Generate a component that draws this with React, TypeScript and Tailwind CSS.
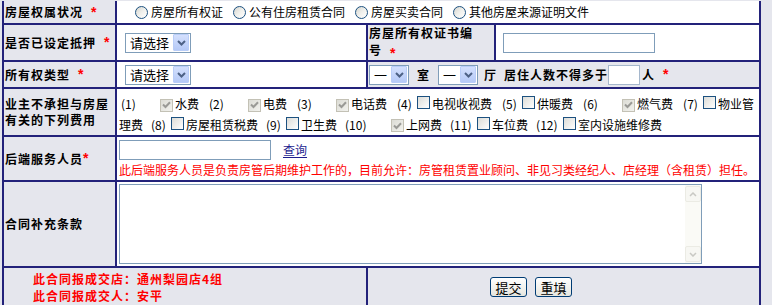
import React from "react";

// legacy rental-contract form, XP style controls

function Star({ tight }: { tight?: boolean }) {
  return (
    <span
      className={`font-['Liberation_Sans',sans-serif] text-[14px] font-bold text-[#ff0000] align-[-3px] ${
        tight ? "ml-0" : "ml-[8px]"
      }`}
    >
      *
    </span>
  );
}

function Select({ text, w }: { text: string; w: string }) {
  return (
    <span
      className={`inline-flex h-[20px] ${w} shrink-0 items-center border border-[#7f9db9] bg-white pl-[4px] pr-px font-normal tracking-normal`}
    >
      <span className="text-[13px] leading-none">{text}</span>
      <span className="ml-auto flex h-[17px] w-[16px] items-center justify-center rounded-[1px] border border-[#b9cdf8] bg-linear-to-b from-[#d4e0fd] to-[#b5c9f7]">
        <svg width="9" height="6" viewBox="0 0 9 6">
          <path d="M1 1 L4.5 4.5 L8 1" fill="none" stroke="#4d6185" strokeWidth="2" />
        </svg>
      </span>
    </span>
  );
}

function Radio({ label }: { label: string }) {
  return (
    <span className="mr-[10px] inline-flex items-center">
      <span className="inline-block h-[13px] w-[13px] rounded-full border border-[#1c5180] bg-linear-to-br from-[#d5d5cf] via-[#f0f0ec] to-white" />
      <span className="ml-[3px]">{label}</span>
    </span>
  );
}

function Check({ checked }: { checked?: boolean }) {
  if (checked) {
    return (
      <span className="inline-flex h-[13px] w-[13px] shrink-0 items-center justify-center border border-[#c3c1b5] bg-linear-to-br from-[#dcdcd5] to-[#f2f2ee]">
        <svg width="9" height="8" viewBox="0 0 9 8">
          <path d="M1 3.5 L3.5 6 L8 1.2" fill="none" stroke="#9a9a96" strokeWidth="2" />
        </svg>
      </span>
    );
  }
  return (
    <span className="inline-block h-[13px] w-[13px] shrink-0 border border-[#1c5180] bg-linear-to-br from-[#dcdcd7] to-white" />
  );
}

type Fee = { n: string; label: string; checked?: boolean };

function FeeItem({ fee, gap }: { fee: Fee; gap: string }) {
  return (
    <span className={`inline-flex items-center ${gap}`}>
      <span className={fee.n.length > 3 ? "w-[24px]" : "w-[17px]"}>{fee.n}</span>
      <span className={fee.checked ? "ml-[22px]" : "ml-[3px]"}>
        <Check checked={fee.checked} />
      </span>
      <span className="ml-[2px]">{fee.label}</span>
    </span>
  );
}

const line1: Fee[] = [
  { n: "(1)", label: "水费", checked: true },
  { n: "(2)", label: "电费", checked: true },
  { n: "(3)", label: "电话费", checked: true },
  { n: "(4)", label: "电视收视费" },
  { n: "(5)", label: "供暖费" },
  { n: "(6)", label: "燃气费", checked: true },
];

const line2: Fee[] = [
  { n: "(8)", label: "房屋租赁税费" },
  { n: "(9)", label: "卫生费" },
  { n: "(10)", label: "上网费", checked: true },
  { n: "(11)", label: "车位费" },
  { n: "(12)", label: "室内设施维修费" },
];

const label = "flex items-center bg-[#e5e6ed] px-px font-bold tracking-[1px]";

export default function App() {
  return (
    <div className="h-[305px] w-[772px] overflow-hidden bg-[#e5e6ed] pl-[2px] pt-px font-['Noto_Sans_CJK_SC',sans-serif] text-[12px] text-black">
      <div className="grid w-[759px] grid-cols-[111px_249px_126px_263px] grid-rows-[22px_35px_25px_46px_43px_84px_40px] gap-[2px] bg-[#23227a] px-[2px] pb-[2px]">
        {/* 房屋权属状况 */}
        <div className={label}>
          房屋权属状况
          <Star />
        </div>
        <div className="col-span-3 flex items-center bg-white pl-[18px]">
          <Radio label="房屋所有权证" />
          <Radio label="公有住房租赁合同" />
          <Radio label="房屋买卖合同" />
          <Radio label="其他房屋来源证明文件" />
        </div>

        {/* 抵押 */}
        <div className={label}>
          是否已设定抵押
          <Star />
        </div>
        <div className="flex items-center bg-white pl-[8px]">
          <Select text="请选择" w="w-[66px]" />
        </div>
        <div className="flex items-center bg-[#e5e6ed] px-px font-bold leading-[17px] tracking-[1px]">
          <span>
            房屋所有权证书编
            <br />
            号<Star />
          </span>
        </div>
        <div className="flex items-center bg-white pl-[7px]">
          <span className="h-[20px] w-[152px] border border-[#7f9db9] bg-white" />
        </div>

        {/* 所有权类型 */}
        <div className={label}>
          所有权类型
          <Star />
        </div>
        <div className="flex items-center bg-white pl-[8px]">
          <Select text="请选择" w="w-[66px]" />
        </div>
        <div className="col-span-2 flex items-center bg-[#e5e6ed] pl-px font-bold tracking-[1px]">
          <Select text="一" w="w-[40px]" />
          <span className="ml-[8px]">室</span>
          <span className="ml-[8px] flex">
            <Select text="一" w="w-[40px]" />
          </span>
          <span className="ml-[6px]">厅</span>
          <span className="ml-[7px]">居住人数不得多于</span>
          <span className="h-[20px] w-[32px] border border-[#a5b7cc] bg-white" />
          <span className="ml-[2px]">人</span>
          <Star />
        </div>

        {/* 费用 */}
        <div className={`${label} leading-[16px]`}>
          <span>
            业主不承担与房屋
            <br />
            有关的下列费用
          </span>
        </div>
        <div className="col-span-3 flex flex-col bg-white pl-[2px] pt-[5px]">
          <div className="flex h-[22px] items-center pl-[2px]">
            {line1.map((f) => (
              <FeeItem key={f.n} fee={f} gap="mr-[10px]" />
            ))}
            <span className="inline-flex items-center">
              <span className="w-[17px]">(7)</span>
              <span className="ml-[3px]">
                <Check />
              </span>
              <span className="ml-[2px]">物业管</span>
            </span>
          </div>
          <div className="flex h-[22px] items-center">
            <span className="mr-[8px]">理费</span>
            {line2.map((f) => (
              <FeeItem key={f.n} fee={f} gap="mr-[8px]" />
            ))}
          </div>
        </div>

        {/* 后端服务人员 */}
        <div className={label}>
          后端服务人员
          <Star tight />
        </div>
        <div className="col-span-3 flex flex-col bg-white pl-[2px] pt-[3px]">
          <div className="flex items-center">
            <span className="h-[20px] w-[152px] border border-[#7f9db9] bg-white" />
            <a className="ml-[12px] text-[#1d1d8f] underline underline-offset-2">查询</a>
          </div>
          <div className="mt-[3px] leading-[14px] text-[#ff0000]">
            此后端服务人员是负责房管后期维护工作的，目前允许：房管租赁置业顾问、非见习类经纪人、店经理（含租赁）担任。
          </div>
        </div>

        {/* 合同补充条款 */}
        <div className={label}>合同补充条款</div>
        <div className="col-span-3 bg-white pl-[2px] pt-[2px]">
          <div className="flex h-[80px] w-[583px] border border-[#7f9db9] bg-white">
            <div className="flex-1" />
            <div className="flex w-[16px] flex-col justify-between bg-[#fafaf6] py-px">
              <span className="flex h-[16px] items-center justify-center rounded-[2px] border border-[#ebebe4] bg-[#f7f7f3]">
                <svg width="8" height="5" viewBox="0 0 8 5">
                  <path d="M1 4 L4 1 L7 4" fill="none" stroke="#c9c9c4" strokeWidth="1.5" />
                </svg>
              </span>
              <span className="flex h-[16px] items-center justify-center rounded-[2px] border border-[#ebebe4] bg-[#f7f7f3]">
                <svg width="8" height="5" viewBox="0 0 8 5">
                  <path d="M1 1 L4 4 L7 1" fill="none" stroke="#c9c9c4" strokeWidth="1.5" />
                </svg>
              </span>
            </div>
          </div>
        </div>

        {/* footer */}
        <div className="col-span-2 flex flex-col bg-[#e5e6ed] pl-[29px] pt-[2px] font-bold leading-[17px] tracking-[1px] text-[#ff0000]">
          <span>此合同报成交店：通州梨园店4组</span>
          <span>此合同报成交人：安平</span>
        </div>
        <div className="col-span-2 flex items-start gap-[8px] bg-[#e5e6ed] pl-[122px] pt-[9px]">
          <button className="h-[20px] w-[37px] rounded-[3px] border border-[#003c74] bg-linear-to-b from-white to-[#e6e6df] text-[13px] leading-none">
            提交
          </button>
          <button className="h-[20px] w-[37px] rounded-[3px] border border-[#003c74] bg-linear-to-b from-white to-[#e6e6df] text-[13px] leading-none">
            重填
          </button>
        </div>
      </div>
    </div>
  );
}
